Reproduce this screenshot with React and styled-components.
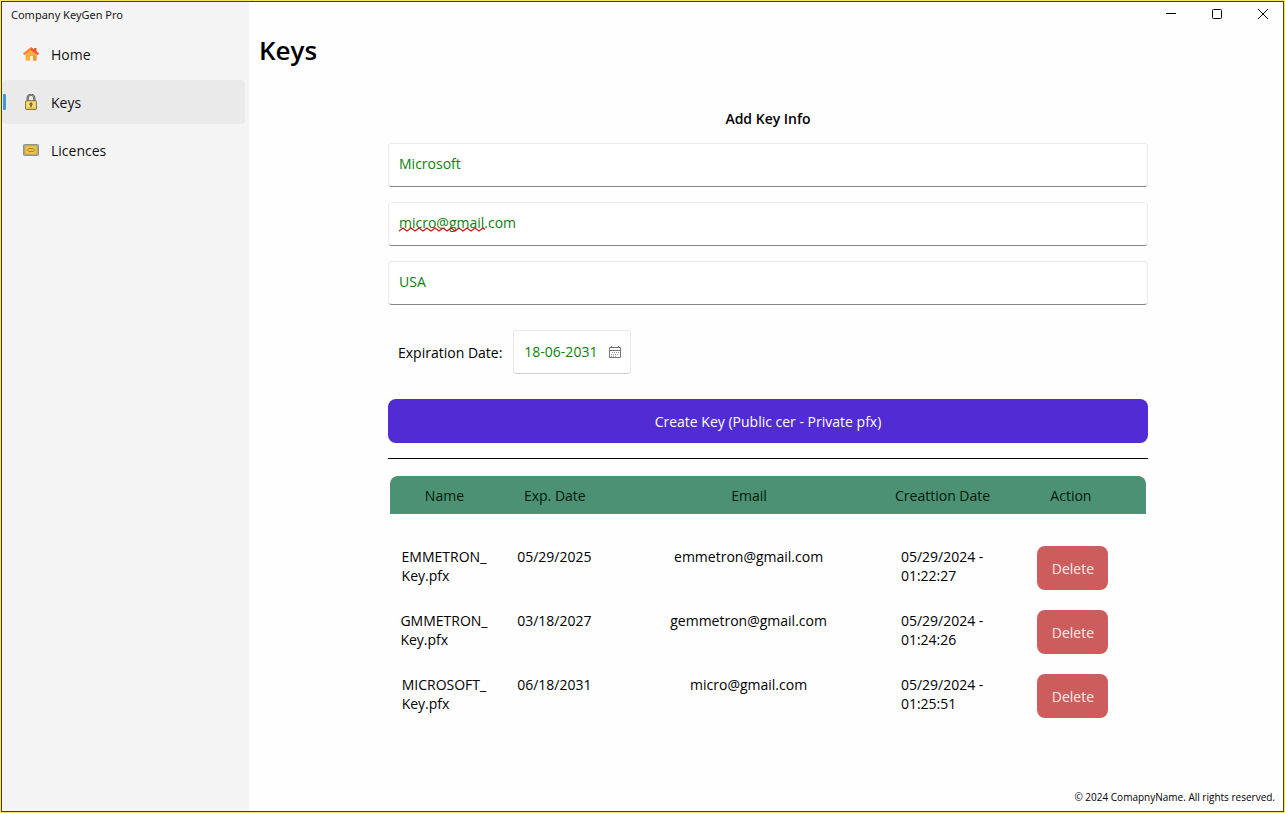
import React, { useState } from 'react';
import styled, { createGlobalStyle } from 'styled-components';

const GlobalStyle = createGlobalStyle`
  * {
    box-sizing: border-box;
  }

  body {
    margin: 0;
    font-family: 'Open Sans', sans-serif;
    font-size: 14px;
    line-height: 19px;
    color: #000;
  }

  button,
  input {
    font: inherit;
  }
`;

const Window = styled.div`
  display: flex;
  min-height: 100vh;
  background: #fefefe;
  border: 1px solid #f3e36b;
`;

const Frame = styled.div`
  flex: 1;
  display: flex;
  border: 1px solid #4a3f10;
`;

const Sidebar = styled.aside`
  flex: 0 0 247px;
  background: #f4f4f4;
`;

const AppName = styled.div`
  height: 30px;
  padding: 3px 9px;
  font-family: 'Noto Sans', sans-serif;
  font-size: 11px;
  color: #1a1a1a;
`;

const NavList = styled.ul`
  display: flex;
  flex-direction: column;
  gap: 4px;
  margin: 0;
  padding: 0 4px 0 0;
  list-style: none;
`;

const NavLink = styled.a`
  display: flex;
  align-items: center;
  gap: 12px;
  height: 44px;
  padding: 0 12px 0 1px;
  border-radius: 4px;
  color: #111;
  text-decoration: none;
  background: ${(props) => (props.$active ? '#eaeaea' : 'transparent')};

  &::before {
    content: '';
    width: 3px;
    height: 16px;
    margin-right: 5px;
    border-radius: 1px;
    background: ${(props) => (props.$active ? '#3c9ad6' : 'transparent')};
  }
`;

const NavIcon = styled.svg`
  width: 16px;
  height: 16px;
`;

const Main = styled.main`
  flex: 1;
  display: flex;
  flex-direction: column;
  min-width: 0;
`;

const WindowControls = styled.div`
  display: flex;
  justify-content: flex-end;
  gap: 6px;
  height: 28px;
`;

const ControlBtn = styled.button`
  display: flex;
  align-items: center;
  justify-content: center;
  width: 40px;
  height: 24px;
  padding: 0;
  border: none;
  background: transparent;
`;

const Title = styled.h1`
  margin: 0;
  padding: 0 10px;
  font-size: 26px;
  font-weight: 600;
  line-height: 40px;
`;

const Content = styled.div`
  width: 100%;
  max-width: 772px;
  margin: 0 auto;
  padding: 39px 4px 0 8px;
`;

const Form = styled.form`
  display: flex;
  flex-direction: column;
  gap: 25px;
  padding-bottom: 15px;
  border-bottom: 1px solid #000;
`;

const FormTitle = styled.h2`
  margin: 0;
  font-size: 14px;
  font-weight: 600;
  line-height: 19px;
  text-align: center;
`;

const Fields = styled.div`
  display: flex;
  flex-direction: column;
  gap: 15px;
`;

const Field = styled.div`
  position: relative;
`;

const TextInput = styled.input`
  display: block;
  width: 100%;
  height: 44px;
  padding: 0 10px 3px;
  border: 1px solid #ececec;
  border-bottom-color: #868686;
  border-radius: 4px;
  background: #fff;
  color: #0c800c;
  outline: none;
`;

const Squiggle = styled.svg`
  position: absolute;
  left: 11px;
  top: 25px;
  width: 86px;
  height: 5px;
  pointer-events: none;
`;

const DateRow = styled.div`
  display: flex;
  align-items: center;
  gap: 11px;
  padding-left: 10px;
`;

const DateBox = styled.div`
  display: flex;
  align-items: center;
  width: 118px;
  height: 44px;
  border: 1px solid #e8e8e8;
  border-bottom-color: #cfcfcf;
  border-radius: 4px;
  background: #fff;
`;

const DateInput = styled.input`
  width: 91px;
  padding: 0 0 1px 10px;
  border: none;
  background: transparent;
  color: #0c800c;
  outline: none;
`;

const CalendarBtn = styled.button`
  display: flex;
  padding: 4px;
  border: none;
  background: transparent;
`;

const CreateBtn = styled.button`
  height: 44px;
  padding: 0;
  border: none;
  border-radius: 8px;
  background: #512bd4;
  color: #fff;
  cursor: pointer;
`;

const TableBox = styled.div`
  padding: 17px 2px 0;
`;

const Table = styled.table`
  width: 100%;
  table-layout: fixed;
  border-collapse: separate;
  border-spacing: 0;
`;

const HeadCell = styled.th`
  width: ${(props) => props.$width};
  height: 38px;
  padding: 0;
  background: #4c9173;
  color: #001a0c;
  font-weight: 400;

  &:first-child {
    border-top-left-radius: 8px;
  }

  &:last-child {
    border-top-right-radius: 8px;
    padding-right: 2px;
  }
`;

const Body = styled.tbody`
  &::before {
    content: '';
    display: block;
    height: 22px;
  }
`;

const Cell = styled.td`
  height: 64px;
  padding: 11px 1px 0 0;
  text-align: center;
  vertical-align: top;
`;

const ActionCell = styled(Cell)`
  padding: 10px 0 10px 2px;
`;

const TwoLines = styled.span`
  display: inline-block;
  text-align: left;
`;

const DeleteBtn = styled.button`
  width: 71px;
  height: 44px;
  padding: 0;
  border: none;
  border-radius: 8px;
  background: #cd5c5c;
  color: #ffecec;
  vertical-align: top;
  cursor: pointer;
`;

const Footer = styled.footer`
  margin-top: auto;
  padding: 0 8px 4px;
  font-size: 10px;
  text-align: right;
`;

const HomeIcon = () => (
  <NavIcon viewBox="0 0 16 16" aria-hidden="true">
    <path d="M2.5 8 8 3.2 13.5 8v6.5H10V10H7.2v4.5H2.5z" fill="#fdae3b" />
    <path d="M10 9.5h3.5v5H10z" fill="#f9932e" />
    <path d="M11.2 2h2.2v4h-2.2z" fill="#d9502c" />
    <path d="M8 1 16 7.6l-1.3 1.6L8 4z" fill="#f0532d" />
    <path d="M8 1 0 7.6l1.3 1.6L8 4z" fill="#fb8034" />
  </NavIcon>
);

const LockIcon = () => (
  <NavIcon viewBox="0 0 16 16" aria-hidden="true">
    <path d="M4.7 7V4a3.3 3.3 0 0 1 6.6 0v3" fill="none" stroke="#4b4d52" strokeWidth="2.2" />
    <path d="M4.7 7V4a3.3 3.3 0 0 1 6.6 0v3" fill="none" stroke="#b8bcc2" strokeWidth="0.7" />
    <rect x="2.6" y="6.8" width="10.8" height="8.7" rx="0.7" fill="#f8de74" stroke="#75632a" strokeWidth="0.9" />
    <path d="M3.5 14h9" stroke="#ddb33a" />
    <circle cx="8" cy="10" r="1.6" fill="#65411f" />
    <path d="M8 10v3.2" stroke="#65411f" strokeWidth="1.2" />
    <circle cx="8" cy="10" r="0.6" fill="#f8de74" />
  </NavIcon>
);

const LicenceIcon = () => (
  <NavIcon viewBox="0 0 16 16" aria-hidden="true">
    <rect x="0.5" y="2.5" width="15" height="11" rx="0.8" fill="#a9aaa4" stroke="#8d948f" />
    <rect x="1.8" y="3.6" width="12.4" height="8.8" rx="2.4" fill="#edc54b" stroke="#b8953c" strokeWidth="0.6" />
    <path d="M5.5 6.5h5M3.5 8h2.5M10 8h2.5M5.5 9.5h5" stroke="#a37c2c" strokeWidth="0.9" />
  </NavIcon>
);

const CalendarIcon = () => (
  <svg width="12" height="12" viewBox="0 0 12 12" aria-hidden="true">
    <path d="M.5 1.5h11v10H.5zM.5 4.5h11M2.5 0v2M9.5 0v2" fill="none" stroke="#777" />
    <path d="M3 6.5h7M2 8.5h8M2 10.2h5" stroke="#999" strokeDasharray="1 1" />
  </svg>
);

const navItems = [
  { label: 'Home', icon: <HomeIcon /> },
  { label: 'Keys', icon: <LockIcon /> },
  { label: 'Licences', icon: <LicenceIcon /> },
];

const columns = [
  { label: 'Name', width: '14.4%' },
  { label: 'Exp. Date', width: '14.8%' },
  { label: 'Email', width: '36.6%' },
  { label: 'Creattion Date', width: '14.6%' },
  { label: 'Action', width: '19.6%' },
];

const initialKeys = [
  { company: 'EMMETRON', exp: '05/29/2025', email: 'emmetron@gmail.com', date: '05/29/2024', time: '01:22:27' },
  { company: 'GMMETRON', exp: '03/18/2027', email: 'gemmetron@gmail.com', date: '05/29/2024', time: '01:24:26' },
  { company: 'MICROSOFT', exp: '06/18/2031', email: 'micro@gmail.com', date: '05/29/2024', time: '01:25:51' },
];

export default function App() {
  const [keys, setKeys] = useState(initialKeys);
  const [form, setForm] = useState({
    company: 'Microsoft',
    email: 'micro@gmail.com',
    country: 'USA',
    expiration: '18-06-2031',
  });

  const handleChange = (e) => {
    setForm({ ...form, [e.target.name]: e.target.value });
  };

  const handleDelete = (company) => {
    setKeys(keys.filter((key) => key.company !== company));
  };

  return (
    <Window>
      <GlobalStyle />
      <Frame>
        <Sidebar>
          <AppName>Company KeyGen Pro</AppName>
          <nav>
            <NavList>
              {navItems.map((item) => (
                <li key={item.label}>
                  <NavLink href={`#${item.label.toLowerCase()}`} $active={item.label === 'Keys'}>
                    {item.icon}
                    {item.label}
                  </NavLink>
                </li>
              ))}
            </NavList>
          </nav>
        </Sidebar>

        <Main>
          <WindowControls>
            <ControlBtn aria-label="Minimize">
              <svg width="10" height="10" viewBox="0 0 10 10">
                <path d="M0 4.5h10" stroke="#000" />
              </svg>
            </ControlBtn>
            <ControlBtn aria-label="Maximize">
              <svg width="10" height="10" viewBox="0 0 10 10">
                <rect x="0.5" y="0.5" width="9" height="9" rx="1" fill="none" stroke="#000" />
              </svg>
            </ControlBtn>
            <ControlBtn aria-label="Close">
              <svg width="10" height="10" viewBox="0 0 10 10">
                <path d="M0 0l10 10M10 0 0 10" stroke="#000" />
              </svg>
            </ControlBtn>
          </WindowControls>

          <Title>Keys</Title>

          <Content>
            <Form onSubmit={(e) => e.preventDefault()}>
              <Fields>
                <FormTitle>Add Key Info</FormTitle>
                <Field>
                  <TextInput name="company" aria-label="Company" value={form.company} onChange={handleChange} />
                </Field>
                <Field>
                  <TextInput
                    name="email"
                    aria-label="Email"
                    spellCheck={false}
                    value={form.email}
                    onChange={handleChange}
                  />
                  {form.email === 'micro@gmail.com' && (
                    <Squiggle aria-hidden="true">
                      <defs>
                        <pattern id="wave" width="8" height="5" patternUnits="userSpaceOnUse">
                          <path d="M-1 3 0 4l4-3 4 3 1-1" fill="none" stroke="#c4191c" strokeWidth="1.3" />
                        </pattern>
                      </defs>
                      <rect width="86" height="5" fill="url(#wave)" />
                    </Squiggle>
                  )}
                </Field>
                <Field>
                  <TextInput name="country" aria-label="Country" value={form.country} onChange={handleChange} />
                </Field>
              </Fields>

              <DateRow>
                <label htmlFor="expiration">Expiration Date:</label>
                <DateBox>
                  <DateInput id="expiration" name="expiration" value={form.expiration} onChange={handleChange} />
                  <CalendarBtn type="button" aria-label="Open calendar">
                    <CalendarIcon />
                  </CalendarBtn>
                </DateBox>
              </DateRow>

              <CreateBtn type="submit">Create Key (Public cer - Private pfx)</CreateBtn>
            </Form>

            <TableBox>
              <Table>
                <thead>
                  <tr>
                    {columns.map((col) => (
                      <HeadCell key={col.label} scope="col" $width={col.width}>
                        {col.label}
                      </HeadCell>
                    ))}
                  </tr>
                </thead>
                <Body>
                  {keys.map((key) => (
                    <tr key={key.company}>
                      <Cell>
                        <TwoLines>
                          {key.company}_<br />
                          Key.pfx
                        </TwoLines>
                      </Cell>
                      <Cell>{key.exp}</Cell>
                      <Cell>{key.email}</Cell>
                      <Cell>
                        <TwoLines>
                          {key.date} -<br />
                          {key.time}
                        </TwoLines>
                      </Cell>
                      <ActionCell>
                        <DeleteBtn type="button" onClick={() => handleDelete(key.company)}>
                          Delete
                        </DeleteBtn>
                      </ActionCell>
                    </tr>
                  ))}
                </Body>
              </Table>
            </TableBox>
          </Content>

          <Footer>© 2024 ComapnyName. All rights reserved.</Footer>
        </Main>
      </Frame>
    </Window>
  );
}
